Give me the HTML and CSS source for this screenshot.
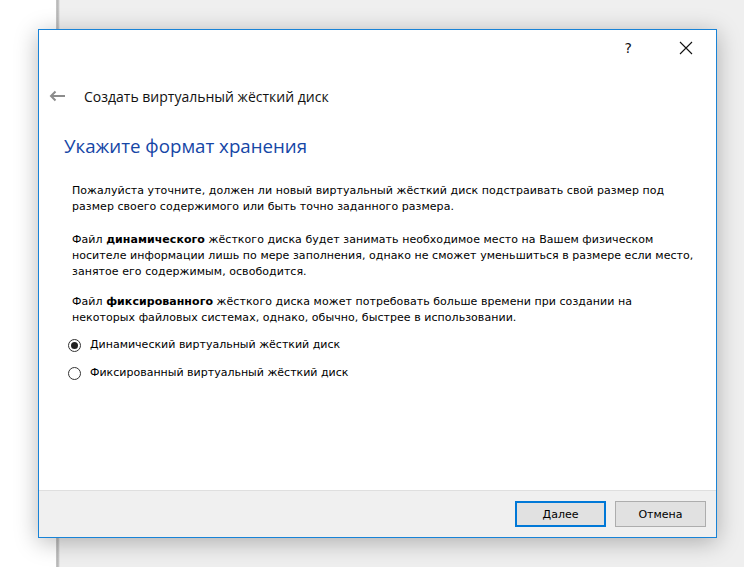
FILE: index.html
```html
<!DOCTYPE html>
<html lang="ru">
<head>
<meta charset="utf-8">
<link rel="stylesheet" href="styles.css">
</head>
<body>
<div class="dialog">
  <div class="titlebar">
    <span class="help">?</span>
    <svg class="close" width="14" height="14" viewBox="0 0 14 14"><path d="M1 1L13 13M13 1L1 13" stroke="#111" stroke-width="1.1" fill="none"/></svg>
  </div>
  <div class="nav">
    <svg class="back" width="16" height="12" viewBox="0 0 16 12"><path d="M16 6H2M6.5 1.5L2 6l4.5 4.5" stroke="#8c8c8c" stroke-width="2" fill="none"/></svg>
    <span class="navtitle">Создать виртуальный жёсткий диск</span>
  </div>
  <div class="content">
    <h1 class="heading">Укажите формат хранения</h1>
    <p class="para p1">Пожалуйста уточните, должен ли новый виртуальный жёсткий диск подстраивать свой размер под размер своего содержимого или быть точно заданного размера.</p>
    <p class="para p2">Файл <b>динамического</b> жёсткого диска будет занимать необходимое место на Вашем физическом носителе информации лишь по мере заполнения, однако не сможет уменьшиться в размере если место, занятое его содержимым, освободится.</p>
    <p class="para p3">Файл <b>фиксированного</b> жёсткого диска может потребовать больше времени при создании на некоторых файловых системах, однако, обычно, быстрее в использовании.</p>
    <div class="options">
      <label class="option"><span class="radio checked"></span>Динамический виртуальный жёсткий диск</label>
      <label class="option"><span class="radio"></span>Фиксированный виртуальный жёсткий диск</label>
    </div>
  </div>
  <div class="footer">
    <button class="btn primary">Далее</button>
    <button class="btn">Отмена</button>
  </div>
</div>
</body>
</html>
```
FILE: styles.css
```css
html, body {
  margin: 0;
  padding: 0;
  height: 100%;
}
body {
  width: 744px;
  height: 567px;
  overflow: hidden;
  background: linear-gradient(to right, #ffffff 0, #ffffff 56px, #c9c9c9 56px, #b4b4b4 58px, #d6d6d6 59px, #efefef 60px, #efefef 100%);
  font-family: "DejaVu Sans", Verdana, sans-serif;
  padding-top: 29px;
  padding-left: 38px;
  box-sizing: border-box;
}
.dialog {
  width: 679px;
  height: 509px;
  box-sizing: border-box;
  border: 1px solid #1883d7;
  background: #fff;
  box-shadow: 0 4px 22px rgba(0, 0, 0, 0.28);
  display: flex;
  flex-direction: column;
}
.titlebar {
  height: 36px;
  display: flex;
  justify-content: flex-end;
  align-items: center;
  padding-right: 23px;
  box-sizing: border-box;
}
.help {
  font-family: "DejaVu Sans", sans-serif;
  font-size: 14px;
  color: #111;
  margin-right: 47px;
  margin-top: -1px;
}
.close {
  display: block;
}
.nav {
  display: flex;
  align-items: center;
  height: 30px;
  margin-top: 15px;
  padding-left: 10px;
}
.back {
  margin-right: 19px;
}
.navtitle {
  font-family: "Open Sans", "Noto Sans", sans-serif;
  font-size: 14px;
  color: #111;
}
.content {
  flex: 1;
  padding-left: 25px;
  padding-right: 19px;
}
.heading {
  margin: 22px 0 0 0;
  font-family: "Open Sans", "Noto Sans", sans-serif;
  font-weight: normal;
  font-size: 18.7px;
  color: #1546a6;
  line-height: 26px;
}
.para {
  margin: 0 0 0 8px;
  font-size: 11px;
  line-height: 16px;
  letter-spacing: 0.05px;
  color: #000;
}
.p1 {
  margin-top: 24px;
}
.p2 {
  margin-top: 17px;
}
.p3 {
  margin-top: 14px;
}
.para b {
  font-weight: bold;
}
.options {
  margin-top: 11px;
  margin-left: 4px;
  display: flex;
  flex-direction: column;
  gap: 12px;
}
.option {
  display: flex;
  align-items: center;
  font-size: 11px;
  color: #000;
  line-height: 16px;
}
.radio {
  width: 13px;
  height: 13px;
  box-sizing: border-box;
  border: 1px solid #333;
  border-radius: 50%;
  margin-right: 9px;
  position: relative;
  background: #fff;
}
.radio.checked::after {
  content: "";
  position: absolute;
  left: 2px;
  top: 2px;
  width: 7px;
  height: 7px;
  border-radius: 50%;
  background: #222;
}
.footer {
  height: 46px;
  background: #f0f0f0;
  border-top: 1px solid #dfdfdf;
  display: flex;
  justify-content: flex-end;
  align-items: center;
  padding-right: 10px;
  gap: 9px;
}
.btn {
  width: 91px;
  height: 26px;
  box-sizing: border-box;
  background: #e1e1e1;
  border: 1px solid #adadad;
  font-family: "DejaVu Sans", sans-serif;
  font-size: 11px;
  color: #000;
  padding: 0;
  margin: 0;
}
.btn.primary {
  border: 2px solid #0078d7;
}
```
